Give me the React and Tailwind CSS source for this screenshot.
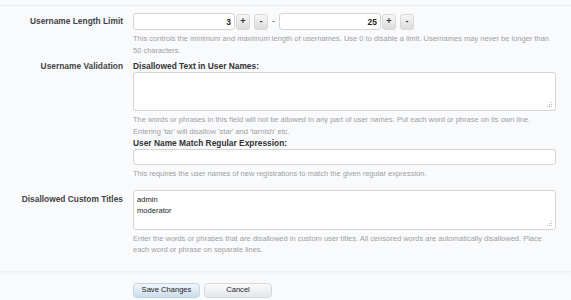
import React from 'react';

const font = { fontFamily: '"Liberation Sans", Arial, sans-serif' };

const Spin = ({ value }) => (
    <div className="flex items-center">
        <input
            readOnly
            value={value}
            className="w-[102px] h-[17px] border border-[#d4d4d4] rounded-[3px] bg-white text-right pr-[3px] text-[8.5px] font-bold text-[#222] outline-none"
        />
        <button className="ml-[1px] w-[14px] h-[16px] rounded-[3px] bg-gradient-to-b from-[#f6f6f6] to-[#dcdcdc] border border-[#d8d8d8] text-[9px] font-bold text-[#333] leading-none">+</button>
        <button className="ml-[4px] w-[14px] h-[16px] rounded-[3px] bg-gradient-to-b from-[#f6f6f6] to-[#dcdcdc] border border-[#d8d8d8] text-[9px] font-bold text-[#333] leading-none">-</button>
    </div>
);

const Help = ({ children }) => (
    <p className="text-[7.5px] leading-[11.5px] text-[#a0a0a0] mt-[3px]">{children}</p>
);

const Grip = () => (
    <svg width="6" height="6" className="absolute right-[2px] bottom-[2px]" viewBox="0 0 6 6">
        <rect x="4" y="0" width="1" height="1" fill="#bbb" />
        <rect x="2" y="2" width="1" height="1" fill="#bbb" />
        <rect x="4" y="2" width="1" height="1" fill="#bbb" />
        <rect x="0" y="4" width="1" height="1" fill="#bbb" />
        <rect x="2" y="4" width="1" height="1" fill="#bbb" />
        <rect x="4" y="4" width="1" height="1" fill="#bbb" />
    </svg>
);

const Row = ({ label, children, className = '' }) => (
    <div className={`flex ${className}`}>
        <div className="w-[126px] shrink-0 text-right pr-[3px] text-[8.4px] font-bold text-[#444]">{label}</div>
        <div className="ml-[7px] w-[423px]">{children}</div>
    </div>
);

export default function App() {
    return (
        <div style={font} className="w-[571px] h-[300px] bg-[#f9fafc] overflow-hidden">
            <div className="h-[5px]" />
            <div className="h-[1px] bg-[#e3eef3]" />

            <Row label={<span className="leading-[17px] block">Username Length Limit</span>} className="mt-[7px]">
                <div className="flex items-center">
                    <Spin value="3" />
                    <span className="mx-[4px] text-[9px] text-[#555]">-</span>
                    <Spin value="25" />
                </div>
                <Help>This controls the minimum and maximum length of usernames. Use 0 to disable a limit. Usernames may never be longer than 50 characters.</Help>
            </Row>

            <Row label={<span className="leading-[12px] block">Username Validation</span>} className="mt-[4px]">
                <div className="text-[8.4px] font-bold text-[#333] leading-[12px]">Disallowed Text in User Names:</div>
                <div className="relative h-[39px] border border-[#d4d4d4] rounded-[3px] bg-white">
                    <Grip />
                </div>
                <Help>The words or phrases in this field will not be allowed in any part of user names. Put each word or phrase on its own line. Entering 'tar' will disallow 'star' and 'tarnish' etc.</Help>
                <div className="text-[8.4px] font-bold text-[#333] leading-[12px]">User Name Match Regular Expression:</div>
                <div className="h-[16px] border border-[#d4d4d4] rounded-[3px] bg-white" />
                <Help>This requires the user names of new registrations to match the given regular expression.</Help>
            </Row>

            <Row label={<span className="leading-[12px] block pt-[3px]">Disallowed Custom Titles</span>} className="mt-[10px]">
                <div className="relative h-[40px] border border-[#d4d4d4] rounded-[3px] bg-white px-[3px] pt-[3px] text-[7.6px] leading-[11px] text-[#222]">
                    <div>admin</div>
                    <div>moderator</div>
                    <Grip />
                </div>
                <Help>Enter the words or phrases that are disallowed in custom user titles. All censored words are automatically disallowed. Place each word or phrase on separate lines.</Help>
            </Row>

            <div className="mt-[15px] h-[1px] bg-[#edf0f2] shadow-[0_1px_2px_rgba(0,0,0,0.04)]" />
            <div className="flex gap-[4px] pl-[133px] pt-[11px]">
                <button className="w-[67px] h-[15px] rounded-[4px] bg-gradient-to-b from-[#f2f7fb] to-[#c9dcec] border border-[#c5d3df] text-[7.6px] text-[#222] leading-none">Save Changes</button>
                <button className="w-[68px] h-[15px] rounded-[4px] bg-gradient-to-b from-[#fbfbfb] to-[#e3e6ea] border border-[#d5d8dc] text-[7.6px] text-[#222] leading-none">Cancel</button>
            </div>
        </div>
    );
}
